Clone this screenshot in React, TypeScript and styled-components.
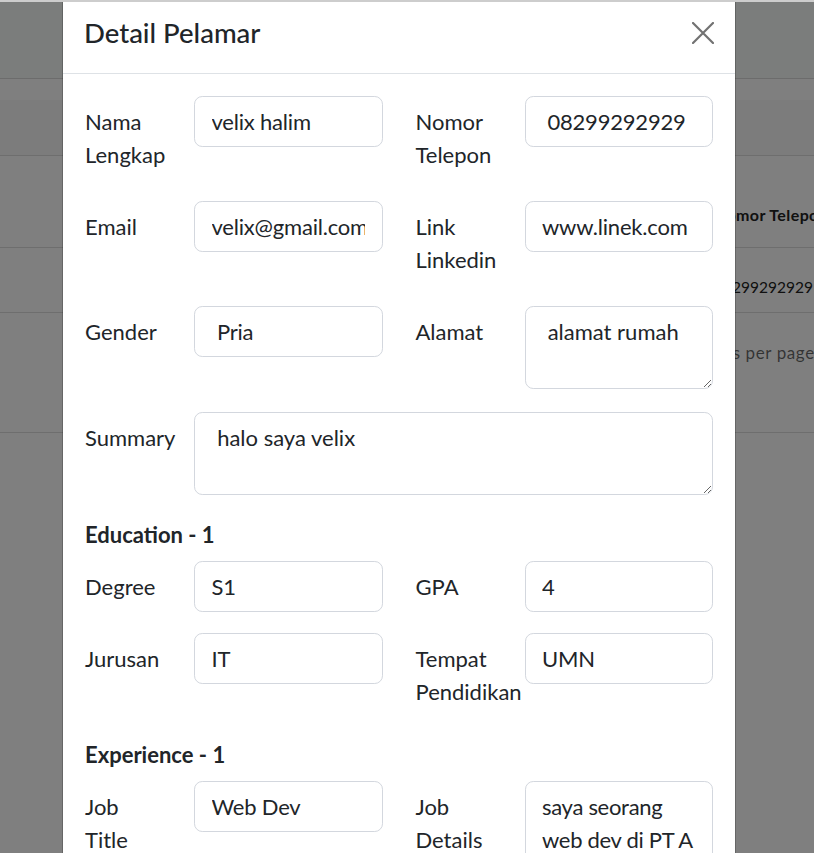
import React from "react";
import styled, { createGlobalStyle } from "styled-components";

const GlobalStyle = createGlobalStyle`
  *, *::before, *::after { box-sizing: border-box; }
  html, body { margin: 0; padding: 0; }
  body {
    background: #ffffff;
    font-family: "Lato", "Segoe UI", sans-serif;
    color: #212529;
    overflow: hidden;
  }
`;

/* ---------- background page (behind the backdrop) ---------- */

const Page = styled.div`
  display: flex;
  flex-direction: column;
  width: 100%;
`;

const NavBar = styled.header`
  height: 79px;
  background: #f6faf8;
  border-bottom: 1px solid #d8d8d8;
`;

const Spacer = styled.div`
  height: 21px;
`;

const Toolbar = styled.div`
  height: 56px;
  background: #f8f8f8;
  border-bottom: 1px solid #dcdcdc;
`;

const TableRow = styled.div<{ $h: number; $pt: number; $indent: number }>`
  height: ${(p) => p.$h}px;
  padding-top: ${(p) => p.$pt}px;
  padding-left: ${(p) => p.$indent}px;
  border-bottom: 1px solid #dcdcdc;
  white-space: nowrap;
  overflow: hidden;
`;

const HeadCell = styled.span`
  font-size: 16px;
  font-weight: 700;
  letter-spacing: 0.4px;
  line-height: 20px;
  color: #222222;
`;

const DataCell = styled.span`
  font-size: 15.5px;
  line-height: 20px;
  color: #222222;
`;

const PagerText = styled.span`
  font-size: 17px;
  letter-spacing: 0.6px;
  line-height: 20px;
  color: rgba(0, 0, 0, 0.6);
`;

/* ---------- overlay layers ---------- */

const TopStrip = styled.div`
  position: fixed;
  top: 0;
  left: 0;
  right: 0;
  height: 2px;
  background: #cdcdcd;
  z-index: 30;
`;

const Backdrop = styled.div`
  position: fixed;
  inset: 0;
  background: rgba(0, 0, 0, 0.5);
  z-index: 10;
`;

const ModalLayer = styled.div`
  position: fixed;
  inset: 0;
  overflow: hidden;
  z-index: 20;
`;

const Dialog = styled.div`
  width: 674px;
  margin: 2px 0 0 62px;
  background: #ffffff;
  background-clip: padding-box;
  border: 1px solid rgba(0, 0, 0, 0.2);
  border-top: none;
  display: flex;
  flex-direction: column;
`;

const Header = styled.div`
  height: 72px;
  padding: 10px 21px 0 21px;
  border-bottom: 1px solid #dee2e6;
  display: flex;
  align-items: flex-start;
  justify-content: space-between;
`;

const Title = styled.h5`
  margin: 0;
  font-size: 27.5px;
  font-weight: 500;
  line-height: 41px;
  color: #212529;
`;

const CloseButton = styled.button`
  width: 22px;
  height: 41px;
  padding: 0;
  border: none;
  background: transparent;
  display: flex;
  align-items: center;
  justify-content: center;
  cursor: pointer;
  opacity: 0.55;
`;

const Body = styled.div`
  padding: 22px;
`;

const Form = styled.div`
  display: flex;
  flex-direction: column;
  gap: 21px;
`;

const Section = styled.section`
  display: flex;
  flex-direction: column;
`;

const SectionTitle = styled.h6`
  margin: 0 0 10px;
  font-size: 22px;
  font-weight: 700;
  line-height: 33px;
  color: #212529;
`;

const FieldGrid = styled.div`
  display: grid;
  grid-template-columns: 1fr 1fr;
  column-gap: 33px;
  row-gap: 20.5px;
  align-items: start;
`;

const Field = styled.div<{ $full?: boolean }>`
  display: grid;
  grid-template-columns: 76px 1fr;
  column-gap: 33px;
  align-items: start;
  grid-column: ${(p) => (p.$full ? "1 / -1" : "auto")};
`;

const Label = styled.label`
  padding: 9.25px 0;
  font-size: 22px;
  line-height: 33px;
  color: #212529;
  white-space: normal;
`;

const controlBase = `
  display: block;
  width: 100%;
  margin: 0;
  padding: 8.25px 16.5px;
  font-family: "Lato", "Segoe UI", sans-serif;
  font-size: 22px;
  line-height: 33px;
  color: #212529;
  background: #ffffff;
  border: 1px solid #d3d7de;
  border-radius: 8.25px;
  outline: none;
`;

const Input = styled.input`
  ${controlBase}
  height: 51px;
  letter-spacing: -0.2px;
`;

const TextArea = styled.textarea<{ $tight?: boolean }>`
  ${controlBase}
  height: 83px;
  margin-bottom: 2px;
  resize: vertical;
  overflow: hidden;
  letter-spacing: ${(p) => (p.$tight ? "-0.3px" : "normal")};
`;

type F = { label: string; value: string; area?: boolean; full?: boolean; tight?: boolean };

const FieldView = ({ f }: { f: F }) => (
  <Field $full={f.full}>
    <Label>{f.label}</Label>
    {f.area ? (
      <TextArea readOnly rows={2} value={f.value} $tight={f.tight} />
    ) : (
      <Input readOnly value={f.value} />
    )}
  </Field>
);

const personal: F[] = [
  { label: "Nama Lengkap", value: "velix halim" },
  { label: "Nomor Telepon", value: " 08299292929" },
  { label: "Email", value: "velix@gmail.com" },
  { label: "Link Linkedin", value: "www.linek.com" },
  { label: "Gender", value: " Pria" },
  { label: "Alamat", value: " alamat rumah", area: true },
  { label: "Summary", value: " halo saya velix", area: true, full: true },
];

const education: F[] = [
  { label: "Degree", value: "S1" },
  { label: "GPA", value: "4" },
  { label: "Jurusan", value: "IT" },
  { label: "Tempat Pendidikan", value: "UMN" },
];

const experience: F[] = [
  { label: "Job Title", value: "Web Dev" },
  { label: "Job Details", value: "saya seorang web dev di PT A", area: true, tight: true },
];

const CloseIcon = () => (
  <svg width="22" height="22" viewBox="0 0 22 22" fill="none">
    <path d="M1 1 L21 21 M21 1 L1 21" stroke="#000" strokeWidth="2.2" strokeLinecap="round" />
  </svg>
);

export default function App() {
  return (
    <>
      <GlobalStyle />
      <Page>
        <NavBar />
        <Spacer />
        <Toolbar />
        <TableRow $h={92} $pt={49} $indent={714}>
          <HeadCell>Nomor Telepon</HeadCell>
        </TableRow>
        <TableRow $h={65} $pt={29} $indent={714}>
          <DataCell>08299292929</DataCell>
        </TableRow>
        <TableRow $h={120} $pt={30} $indent={698}>
          <PagerText>Rows per page:</PagerText>
        </TableRow>
      </Page>

      <Backdrop />

      <ModalLayer>
        <Dialog role="dialog">
          <Header>
            <Title>Detail Pelamar</Title>
            <CloseButton aria-label="Close">
              <CloseIcon />
            </CloseButton>
          </Header>
          <Body>
            <Form>
              <FieldGrid>
                {personal.map((f) => (
                  <FieldView key={f.label} f={f} />
                ))}
              </FieldGrid>
              <Section>
                <SectionTitle>Education - 1</SectionTitle>
                <FieldGrid>
                  {education.map((f) => (
                    <FieldView key={f.label} f={f} />
                  ))}
                </FieldGrid>
              </Section>
              <Section>
                <SectionTitle>Experience - 1</SectionTitle>
                <FieldGrid>
                  {experience.map((f) => (
                    <FieldView key={f.label} f={f} />
                  ))}
                </FieldGrid>
              </Section>
            </Form>
          </Body>
        </Dialog>
      </ModalLayer>
      <TopStrip />
    </>
  );
}
